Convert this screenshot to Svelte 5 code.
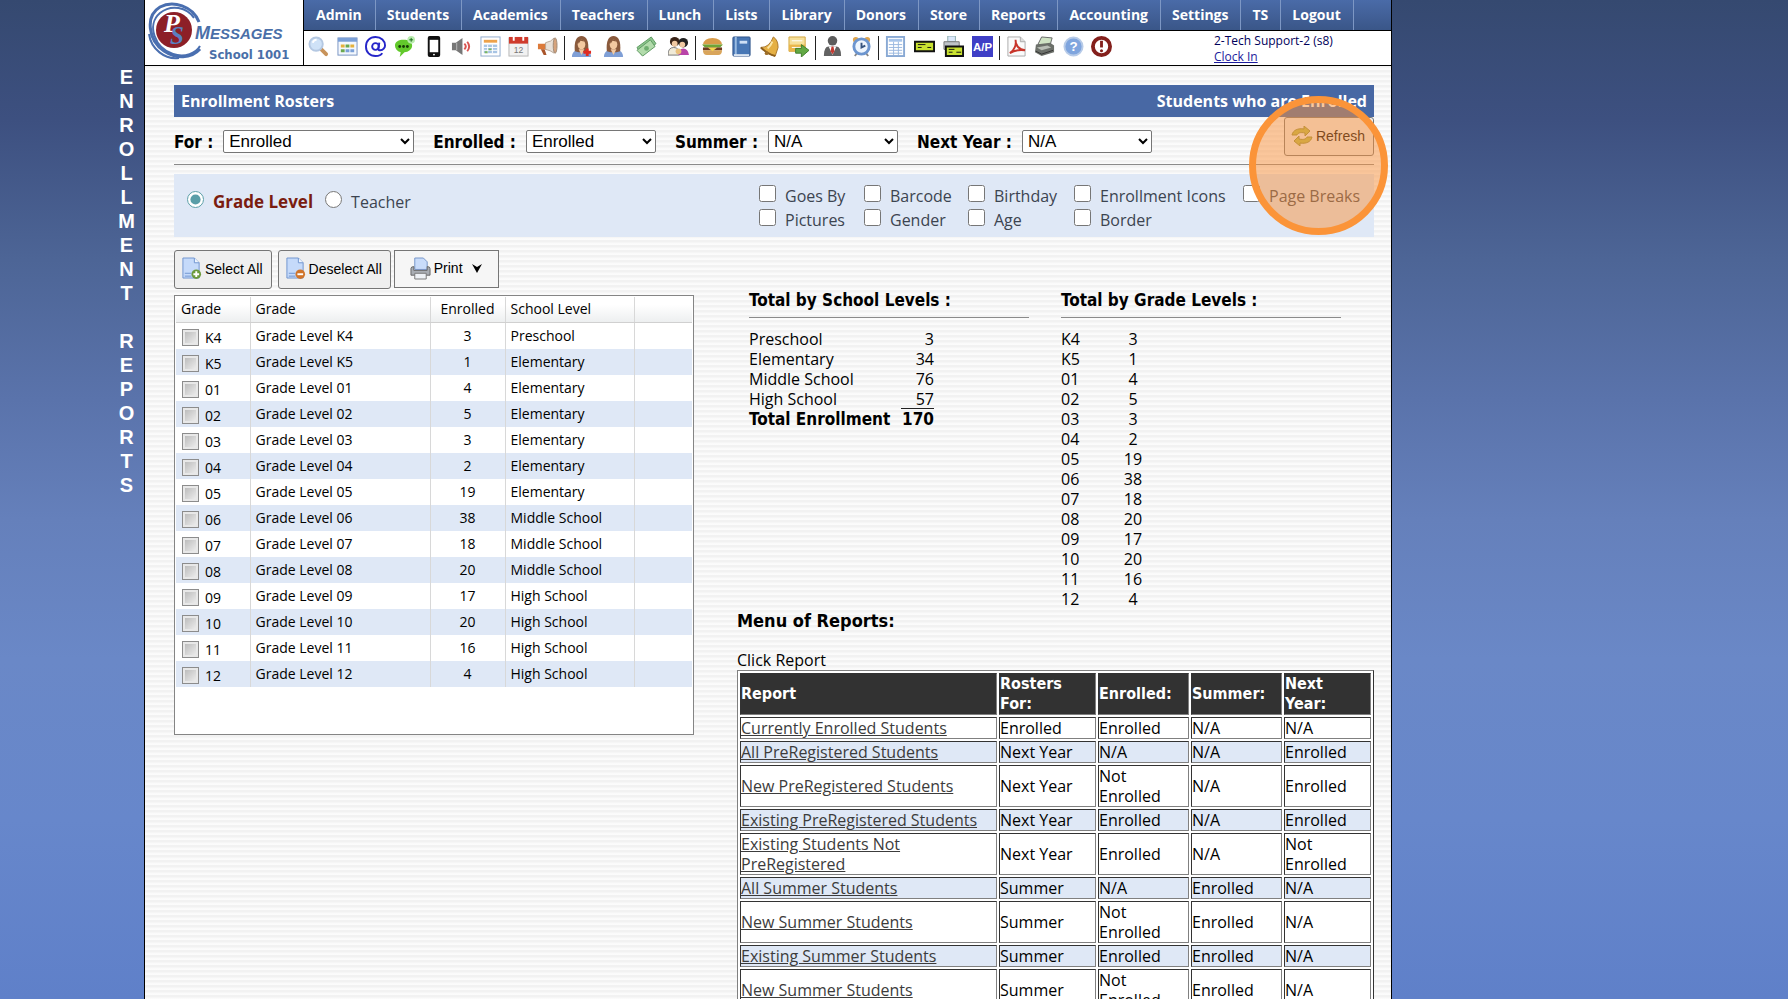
<script lang="ts">
  const navItems = ['Admin', 'Students', 'Academics', 'Teachers', 'Lunch', 'Lists', 'Library', 'Donors', 'Store', 'Reports', 'Accounting', 'Settings', 'TS', 'Logout'];

  const iconGroups = [
    { width: 250, icons: ['search', 'planner', 'email', 'chat', 'phone', 'speaker', 'schedule', 'calendar', 'megaphone'] },
    { width: 118, icons: ['addperson', 'person', 'money', 'family'] },
    { width: 107, icons: ['burger', 'book', 'bell', 'export'] },
    { width: 50, icons: ['staff', 'clock'] },
    { width: 108, icons: ['ledger', 'check', 'printcheck', 'payable'] },
    { width: 106, icons: ['pdf', 'register', 'help', 'alert'] }
  ];

  const woman = '<path d="M1 22c0-5 3-7 7-7h6c4 0 7 2 7 7z" fill="#7f9fd6"/><path d="M4 16C3 5 6 0 11 0s8 5 7 16l-4 1H8z" fill="#8a5a3c"/><ellipse cx="11" cy="9" rx="4" ry="5" fill="#f3c9a0"/><path d="M7 5q4-3 8 1l-5-1-2 3z" fill="#8a5a3c"/><path d="M8 14h6l-3 6z" fill="#f3c9a0"/>';
  const cheque = '<path d="M3 11h18v10H3z" fill="#c9e230" stroke="#111" stroke-width="2"/><path d="M6 14h6M6 17h4M14 17h5" stroke="#111" stroke-width="1"/>';

  const icons: Record<string, string> = {
    search: '<path d="m14 14 5 5" stroke="#c8935a" stroke-width="4" stroke-linecap="round"/><circle cx="8.500" cy="8.500" r="7" fill="#cfe2f7" stroke="#b4c8e2" stroke-width="2"/><path d="M5 7q1-3 4-3" stroke="#fff" stroke-width="2" fill="none"/>',
    planner: '<rect x="1" y="2" width="20" height="18" fill="#f4f8fd" stroke="#7793c2"/><path d="M1 2h20v4H1z" fill="#7ba0d8"/><path d="M4 9h4v3H4zM14 9h4v3h-4z" fill="#e5b13d"/><path d="M9 9h4v3H9zM4 14h4v3H4z" fill="#6aa84f"/><path d="M9 14h4v3H9zM14 14h4v3h-4z" fill="#7ba0d8"/>',
    email: '<g fill="none" stroke="#2525c9" stroke-width="2"><circle cx="11" cy="11" r="3.500"/><path d="m15 7-1 6q0 2 2 2c3 0 5-3 5-5 0-5-4-9-10-9-6 0-10 4-10 10s4 10 10 10c3 0 6-1 7-3"/></g>',
    chat: '<path d="M10 4c5 0 9 2 9 6s-4 7-8 7l-5 5 1-5c-4-1-6-4-6-7 0-4 4-6 9-6z" fill="#62c92b"/><g fill="#163b06"><circle cx="6" cy="11" r="1.500"/><circle cx="10" cy="11" r="1.500"/><circle cx="14" cy="11" r="1.500"/></g><circle cx="18" cy="4" r="4" fill="#b9ecae"/><path d="M18 2v4M16 4h4" stroke="#1b6a1b"/>',
    phone: '<rect x="5" y="0" width="13" height="22" rx="2" fill="#111"/><path d="M7 4h9v13H7z" fill="#fff"/><circle cx="11.500" cy="19.500" r="1" fill="#fff"/>',
    speaker: '<path d="M1 7h4l7-5v18l-7-5H1z" fill="#777"/><path d="M6 7v8" stroke="#bbb"/><path d="M14 8q3 3 0 6M17 6q4 5 0 10" fill="none" stroke="#d9534f" stroke-width="2"/>',
    schedule: '<rect x="1" y="1" width="20" height="20" fill="#fff" stroke="#8fa9cc"/><path d="M4 4h14v3H4z" fill="#eda24b"/><path d="M4 9h14v9H4z" fill="#a7c4e4"/><path d="M4 12h14M4 15h14M8 9v9M13 9v9" stroke="#fff"/><path d="M5 16h3v2H5zM9 13h3v2H9z" fill="#7bb662"/>',
    calendar: '<rect x="1" y="2" width="20" height="19" fill="#f1f1f1" stroke="#b5b5b5"/><path d="M1 1h20v7H1z" fill="#cf3b2c"/><path d="M6 0v5M16 0v5" stroke="#fff" stroke-width="2"/><text x="11" y="18" font-size="9" text-anchor="middle" fill="#777" font-family="Liberation Sans">12</text>',
    megaphone: '<path d="M1 8h7l2-1v8l-2-1H1z" fill="#dc7a3a"/><path d="M9 7q6-1 9-5v16q-4-3-9-4z" fill="#e8e0d8" stroke="#b9a695"/><path d="M4 14h4l2 6H7z" fill="#a9552b"/><ellipse cx="19" cy="10" rx="2" ry="8" fill="#d6a37c" stroke="#a08a78"/>',
    addperson: woman + '<path d="M17 13v8M13 17h8" stroke="#e02b20" stroke-width="3"/>',
    person: woman,
    money: '<path d="M1 12 16 1l5 7L6 20z" fill="#8cc48c" stroke="#5d9a62"/><path d="M1 15 15 4l5 7L7 21z" fill="#b2dbab" stroke="#5d9a62"/><circle cx="11" cy="13" r="2.500" fill="#6fae70"/>',
    family: '<path d="M0 20q0-8 6-8t6 8z" fill="#f0ead8" stroke="#777"/><path d="M11 20q0-7 5-7t6 7z" fill="#b944a8"/><circle cx="7" cy="6" r="5" fill="#3a2418"/><circle cx="7" cy="8" r="3" fill="#f0c9a2"/><circle cx="16" cy="7" r="5" fill="#222"/><circle cx="15" cy="9" r="3" fill="#f0c9a2"/><circle cx="11" cy="16" r="3" fill="#eac07c"/>',
    burger: '<path d="M1 9q1-7 10-7t10 7z" fill="#d89c49"/><path d="M0 9h22l-3 3H3z" fill="#6da436"/><path d="M1 12h20v3H1z" fill="#6e3a1e"/><path d="M1 15h20q0 5-4 5H5q-4 0-4-5z" fill="#d9a55b"/><path d="m6 12 5 4 5-4z" fill="#f4d44c"/>',
    book: '<rect x="2" y="1" width="18" height="20" rx="1" fill="#4877b5" stroke="#2f5489"/><path d="M5 1v20" stroke="#9bbce2" stroke-width="2"/><path d="M9 5h8v3H9z" fill="#cfe0f5"/><path d="M3 20h16" stroke="#dce6f2" stroke-width="2"/>',
    bell: '<path d="M15 1q5 3 5 11l-3 9Q9 20 2 12 11 12 15 1z" fill="#e5b044" stroke="#a8762a"/><path d="M2 12q7 7 15 9" stroke="#8c5f1e" stroke-width="2" fill="none"/><circle cx="8" cy="18" r="2" fill="#9d6e27"/><path d="M14 6q-2 5-5 7" stroke="#fbe6a7" stroke-width="2" fill="none"/>',
    export: '<path d="M1 1h17v15H1z" fill="#f6e09a" stroke="#d3a63f"/><path d="M1 9h17v7H1z" fill="#eab64a"/><path d="M4 12h11M4 5h11" stroke="#fff"/><path d="M8 13h6V9l8 6-8 7v-4H8z" fill="#62a944" stroke="#3f7d2a"/>',
    staff: '<circle cx="11" cy="5" r="5" fill="#5d5d5d"/><path d="M2 21q0-10 5-10h8q5 0 5 10z" fill="#626262"/><path d="m7 11 4 9 4-9z" fill="#fff"/><path d="m10 11-1 5 2 3 2-3-1-5z" fill="#c33a31"/>',
    clock: '<circle cx="5" cy="4" r="3" fill="#e0a54c"/><circle cx="17" cy="4" r="3" fill="#e0a54c"/><path d="m4 21 3-4M18 21l-3-4" stroke="#888" stroke-width="2"/><circle cx="11" cy="11" r="8" fill="#eef5fd" stroke="#6c95cf" stroke-width="3"/><path d="M11 7v5l4-2" fill="none" stroke="#38557f" stroke-width="2"/>',
    ledger: '<rect x="2" y="1" width="18" height="20" fill="#fff" stroke="#89a9d4" stroke-width="2"/><path d="M4 3h14v3H4z" fill="#a8c5ea"/><path d="M4 9h14M4 12h14M4 15h14M4 18h14M9 6v14M14 6v14" stroke="#9ab8df"/>',
    check: '<path d="M1 6h20v10H1z" fill="#c9e230" stroke="#111" stroke-width="2"/><path d="M4 9h8M4 12h4M14 12h4" stroke="#111"/>',
    printcheck: '<path d="M5 0h8v6H5z" fill="#dbe8fb" stroke="#8aa"/><path d="M1 6h16v8H1z" fill="#bfc4c9" stroke="#777"/>' + cheque,
    payable: '<rect width="22" height="22" fill="#3f3fc6"/><text x="11" y="16" font-size="12" font-weight="bold" text-anchor="middle" fill="#fff" font-family="Liberation Sans">A/P</text>',
    pdf: '<path d="M2 1h13l5 5v15H2z" fill="#fafafa" stroke="#aaa"/><path d="M15 1v5h5" fill="#ddd" stroke="#aaa"/><path d="M4 18c5-3 7-9 6-14 0 6 3 10 10 11-6-1-11 0-16 3z" fill="none" stroke="#c8352b" stroke-width="2"/>',
    register: '<path d="m8 1 11 1-2 7H4z" fill="#cfe3c4" stroke="#666"/><path d="M2 9 17 7l4 3v7L8 21l-7-4z" fill="#6c706a"/><path d="m3 12 11-2 4 2-10 3z" fill="#b9beb6"/><path d="m2 16 6 3 12-4" stroke="#333" fill="none"/>',
    help: '<circle cx="11" cy="11" r="9.500" fill="#7fa5de" stroke="#b7cbe8" stroke-width="2"/><text x="11" y="16" font-size="14" font-weight="bold" text-anchor="middle" fill="#fff" font-family="Liberation Sans">?</text>',
    alert: '<circle cx="11" cy="11" r="9" fill="#fff" stroke="#84201c" stroke-width="4"/><path d="M11 5v7" stroke="#84201c" stroke-width="3"/><circle cx="11" cy="15.500" r="1.600" fill="#84201c"/>'
  };

  const sideTitle = 'ENROLLMENT REPORTS'.split('');

  const filters = [
    { id: 'for', label: 'For :', value: 'Enrolled', wide: true },
    { id: 'enrolled', label: 'Enrolled :', value: 'Enrolled' },
    { id: 'summer', label: 'Summer :', value: 'N/A' },
    { id: 'next-year', label: 'Next Year :', value: 'N/A' }
  ];

  const options = ['Goes By', 'Barcode', 'Birthday', 'Enrollment Icons', 'Page Breaks', 'Pictures', 'Gender', 'Age', 'Border'];

  const grades = [
    { grade: 'K4', count: 3, level: 'Preschool' },
    { grade: 'K5', count: 1, level: 'Elementary' },
    { grade: '01', count: 4, level: 'Elementary' },
    { grade: '02', count: 5, level: 'Elementary' },
    { grade: '03', count: 3, level: 'Elementary' },
    { grade: '04', count: 2, level: 'Elementary' },
    { grade: '05', count: 19, level: 'Elementary' },
    { grade: '06', count: 38, level: 'Middle School' },
    { grade: '07', count: 18, level: 'Middle School' },
    { grade: '08', count: 20, level: 'Middle School' },
    { grade: '09', count: 17, level: 'High School' },
    { grade: '10', count: 20, level: 'High School' },
    { grade: '11', count: 16, level: 'High School' },
    { grade: '12', count: 4, level: 'High School' }
  ];

  const schoolLevels = [
    ['Preschool', 3],
    ['Elementary', 34],
    ['Middle School', 76],
    ['High School', 57]
  ];

  const reports = [
    ['Currently Enrolled Students', 'Enrolled', 'Enrolled', 'N/A', 'N/A'],
    ['All PreRegistered Students', 'Next Year', 'N/A', 'N/A', 'Enrolled'],
    ['New PreRegistered Students', 'Next Year', 'Not Enrolled', 'N/A', 'Enrolled'],
    ['Existing PreRegistered Students', 'Next Year', 'Enrolled', 'N/A', 'Enrolled'],
    ['Existing Students Not PreRegistered', 'Next Year', 'Enrolled', 'N/A', 'Not Enrolled'],
    ['All Summer Students', 'Summer', 'N/A', 'Enrolled', 'N/A'],
    ['New Summer Students', 'Summer', 'Not Enrolled', 'Enrolled', 'N/A'],
    ['Existing Summer Students', 'Summer', 'Enrolled', 'Enrolled', 'N/A'],
    ['New Summer Students', 'Summer', 'Not Enrolled', 'Enrolled', 'N/A']
  ];

  let view = $state('grade');
  let checked = $state(grades.map(() => false));

  function setAll(value: boolean) {
    checked = grades.map(() => value);
  }
</script>

{#snippet page(color: string, minus: boolean)}
  <svg class="btn-icon" viewBox="0 0 22 24" aria-hidden="true">
    <path d="M2 1h12l5 5v16H2z" fill="#c5dafa" stroke="#6f94cf" />
    <path d="M14 1v5h5" fill="#eef5ff" stroke="#6f94cf" />
    <path d="M4 17h7M4 20h7" stroke="#6f94cf" />
    <circle cx="16" cy="18" r="5" fill={color} />
    <path d={minus ? 'M13 18h6' : 'M13 18h6M16 15v6'} stroke="#fff" stroke-width="2" />
  </svg>
{/snippet}

<div class="screen">
  <aside class="side-title" aria-label="Enrollment Reports">
    {#each sideTitle as letter}
      <span>{letter}</span>
    {/each}
  </aside>

  <div class="page">
    <header>
      <a class="logo" href="#home" aria-label="Messages, School 1001">
        <svg viewBox="0 0 158 65">
          <g fill="none" stroke="#4a6fb0">
            <path d="M54 22C48 6 28 0 15 7 0 16 3 40 19 51c12 8 27 8 36-2" stroke-width="3" />
            <path d="M49 18C42 7 26 4 15 13 1 25 10 48 28 54c12 4 23-1 27-8" stroke-width="2" />
            <path d="M34 58c-14 2-28-9-30-24" stroke-width="2" />
          </g>
          <circle cx="29" cy="30" r="18" fill="#8d1f27" />
          <text x="19" y="32" class="mono" font-size="26" fill="#fff">P</text>
          <text x="25" y="44" class="mono" font-size="25" fill="#5a80c0">S</text>
          <text x="50" y="39" class="brand" font-size="18">M<tspan font-size="15">ESSAGES</tspan></text>
          <text x="64" y="59" class="school" font-size="13">School 1001</text>
        </svg>
      </a>
      <div class="bars">
        <nav>
          {#each navItems as item}
            <a href="#{item.toLowerCase()}">{item}</a>
          {/each}
        </nav>
        <div class="toolbar">
          <div class="icon-groups">
            {#each iconGroups as group}
              <div class="icon-group">
                <div class="icons" style="width: {group.width}px">
                  {#each group.icons as icon}
                    <a href="#{icon}" aria-label={icon}><svg viewBox="0 0 22 22">{@html icons[icon]}</svg></a>
                  {/each}
                </div>
              </div>
            {/each}
          </div>
          <div class="user">
            <div>2-Tech Support-2 (s8)</div>
            <a href="#clock-in">Clock In</a>
          </div>
        </div>
      </div>
    </header>

    <main>
      <div class="title-bar">
        <span>Enrollment Rosters</span>
        <span>Students who are Enrolled</span>
      </div>

      <div class="filters">
        {#each filters as filter}
          <div class="filter">
            <label for={filter.id}>{filter.label}</label>
            <select id={filter.id} class:wide={filter.wide}>
              <option>{filter.value}</option>
            </select>
          </div>
        {/each}
        <div class="refresh">
          <button type="button">
            <svg viewBox="0 0 22 20" aria-hidden="true">
              <path d="M1 9c1-5 6-7 12-6V0l6 5-5 5V7C9 6 7 7 6 9z" fill="#b9bd4a" stroke="#8f8d38" />
              <path d="M21 11c-1 5-6 7-12 6v3l-6-5 5-5v3c5 1 7 0 8-2z" fill="#b9bd4a" stroke="#8f8d38" />
            </svg>
            Refresh
          </button>
          <span class="highlight"></span>
        </div>
      </div>

      <div class="options">
        <div class="views">
          <label class:active={view === 'grade'}><input type="radio" value="grade" bind:group={view} />Grade Level</label>
          <label class:active={view === 'teacher'}><input type="radio" value="teacher" bind:group={view} />Teacher</label>
        </div>
        <div class="checks">
          {#each options as option}
            <label><input type="checkbox" />{option}</label>
          {/each}
        </div>
      </div>

      <div class="columns">
        <section class="roster">
          <div class="buttons">
            <button type="button" onclick={() => setAll(true)}>{@render page('#6c9a3c', false)}Select All</button>
            <button type="button" onclick={() => setAll(false)}>{@render page('#d0742a', true)}Deselect All</button>
            <button type="button" class="print">
              <svg class="btn-icon" viewBox="0 0 22 24" aria-hidden="true">
                <path d="M5 1h9l4 4v8H5z" fill="#c9dcfa" stroke="#7494c8" />
                <path d="M1 12q0-2 3-2v4h14v-4q3 0 3 2v7H1z" fill="#a9adb3" stroke="#666" />
                <path d="M5 17h12v6H5z" fill="#eef1f5" stroke="#777" />
              </svg>
              Print
              <svg class="caret" viewBox="0 0 10 9" aria-hidden="true"><path d="m0 0 5 3 5-3-5 9z" /></svg>
            </button>
          </div>

          <div class="grid-box">
            <table class="grid">
              <colgroup>
                <col class="c-check" /><col class="c-name" /><col class="c-count" /><col class="c-level" /><col />
              </colgroup>
              <thead>
                <tr><th>Grade</th><th>Grade</th><th class="num">Enrolled</th><th>School Level</th><th></th></tr>
              </thead>
              <tbody>
                {#each grades as row, i}
                  <tr>
                    <td><label class="pick"><input type="checkbox" bind:checked={checked[i]} />{row.grade}</label></td>
                    <td>Grade Level {row.grade}</td>
                    <td class="num">{row.count}</td>
                    <td>{row.level}</td>
                    <td></td>
                  </tr>
                {/each}
              </tbody>
            </table>
          </div>
        </section>

        <section class="summary">
          <div class="totals">
            <div class="total">
              <h3>Total by School Levels :</h3>
              <table>
                <tbody>
                  {#each schoolLevels as [name, count]}
                    <tr><td class="name">{name}</td><td class="sum">{count}</td></tr>
                  {/each}
                  <tr class="grand"><td class="name">Total Enrollment</td><td class="sum">170</td></tr>
                </tbody>
              </table>
            </div>
            <div class="total">
              <h3>Total by Grade Levels :</h3>
              <table>
                <tbody>
                  {#each grades as row}
                    <tr><td class="code">{row.grade}</td><td class="count">{row.count}</td></tr>
                  {/each}
                </tbody>
              </table>
            </div>
          </div>

          <h2>Menu of Reports:</h2>
          <p>Click Report</p>
          <table class="reports">
            <colgroup>
              <col class="r-name" /><col class="r-for" /><col class="r-mid" /><col class="r-mid" /><col />
            </colgroup>
            <thead>
              <tr><th>Report</th><th>Rosters For:</th><th>Enrolled:</th><th>Summer:</th><th>Next<br />Year:</th></tr>
            </thead>
            <tbody>
              {#each reports as [name, ...cells]}
                <tr>
                  <td><a href="#report">{name}</a></td>
                  {#each cells as cell}
                    <td>{cell}</td>
                  {/each}
                </tr>
              {/each}
            </tbody>
          </table>
        </section>
      </div>
    </main>
  </div>
</div>

<style>
  :global(body) {
    background: #5f80c9;
  }

  .screen {
    --bold: 'DejaVu Sans Condensed', 'DejaVu Sans', sans-serif;
    --text: 'Open Sans', 'Noto Sans', sans-serif;
    display: grid;
    grid-template-columns: 144px minmax(0, 1248px) 1fr;
    height: 100vh;
    overflow: hidden;
    background: linear-gradient(#354970, #3d5080 12%, #4d6596 26%, #5a73ab 40%, #6580bb 52%, #6a88c7 66%, #6787cb 82%, #5f80c9);
    font-family: var(--text);
    font-size: 16px;
    line-height: 20px;
    color: #000;
  }

  .side-title {
    display: flex;
    flex-direction: column;
    align-items: center;
    width: 35px;
    margin-left: auto;
    padding-top: 65px;
    font: bold 20px/24px 'Liberation Sans', Arial, sans-serif;
    color: #fff;
  }

  .side-title span {
    height: 24px;
  }

  .page {
    border: solid #000;
    border-width: 0 1px;
    background: repeating-linear-gradient(#f2f2f2 0, #f2f2f2 2px, #fafafa 3px, #fcfcfc 5px);
  }

  header {
    display: flex;
    height: 65px;
    background: #fff;
    border-bottom: 1px solid #000;
  }

  .logo {
    width: 158px;
    border-right: 1px solid #000;
  }

  .logo svg {
    display: block;
    height: 65px;
  }

  .mono {
    font-family: 'Liberation Serif', serif;
    font-weight: bold;
    font-style: italic;
  }

  .brand {
    font-family: 'Liberation Sans', sans-serif;
    font-weight: bold;
    font-style: italic;
    fill: #4a6fa8;
  }

  .school {
    font-family: var(--bold);
    font-weight: bold;
    fill: #4a6fa8;
  }

  .bars {
    flex: 1;
  }

  nav {
    display: flex;
    height: 30px;
    background: linear-gradient(#4a6ba8, #3a5688);
    border-bottom: 1px solid #000;
  }

  nav a {
    padding: 0 12px 0 11px;
    border-right: 1px solid #7d97c4;
    font: bold 14px/30px var(--text);
    color: #fff;
    text-decoration: none;
  }

  nav a:first-child {
    padding: 0 13px 0 12px;
  }

  .toolbar {
    display: flex;
    justify-content: space-between;
    padding: 2px 60px 0 4px;
  }

  .icon-groups {
    display: flex;
    padding-top: 3px;
  }

  .icon-group {
    height: 24px;
    padding: 0 6px;
    border-right: 1px solid #222;
  }

  .icon-group:first-child {
    padding-left: 0;
  }

  .icon-group:last-child {
    border-right: 0;
  }

  .icons {
    display: flex;
    justify-content: space-between;
  }

  .icons svg {
    display: block;
    width: 21px;
    height: 21px;
  }

  .user {
    width: 117px;
    font-size: 12px;
    line-height: 16px;
    white-space: nowrap;
    color: #00005a;
  }

  .user a {
    color: #1a1a9c;
  }

  main {
    padding: 19px 17px 0 29px;
  }

  .title-bar {
    display: flex;
    justify-content: space-between;
    padding: 0 7px;
    background: #4868a4;
    font: bold 16px/32px var(--text);
    color: #fff;
  }

  .filters {
    display: flex;
    gap: 19px;
    height: 47px;
    border-bottom: 1px solid #8a8a8a;
  }

  .filter {
    display: flex;
    align-items: center;
    gap: 10px;
    padding-top: 2px;
    font: bold 17px/20px var(--bold);
  }

  select {
    width: 130px;
    height: 23px;
    padding: 0 1px;
    border: 1px solid #767676;
    border-radius: 2px;
    background: #fff;
    font: 17px 'Liberation Sans', Arial, sans-serif;
  }

  select.wide {
    width: 191px;
  }

  .refresh {
    position: relative;
    margin-left: auto;
  }

  button {
    display: flex;
    align-items: center;
    gap: 3px;
    height: 39px;
    padding: 0 8px 2px 6px;
    border: 1px solid #767676;
    border-radius: 3px;
    background: #efefef;
    font: 14px 'Liberation Sans', Arial, sans-serif;
    color: #000;
  }

  .refresh svg {
    width: 22px;
    height: 20px;
  }

  .highlight {
    position: absolute;
    top: -21px;
    right: -14px;
    z-index: 1;
    box-sizing: border-box;
    width: 139px;
    height: 139px;
    border: 7px solid #fb9439;
    border-radius: 50%;
    background: rgba(250, 146, 60, 0.5);
    pointer-events: none;
  }

  .options {
    display: flex;
    justify-content: space-between;
    height: 63px;
    margin-top: 9px;
    background: #dfe8f6;
    color: #3c4450;
  }

  .options input {
    width: 17px;
    height: 17px;
    margin: 1px 0 0;
  }

  .options label {
    display: flex;
    line-height: 24px;
    white-space: nowrap;
  }

  .views {
    display: flex;
    gap: 12px;
    padding: 16px 0 0 13px;
  }

  .views label {
    gap: 9px;
  }

  .views .active {
    font-weight: bold;
    font-size: 17px;
    color: #7a1c10;
  }

  .views input {
    accent-color: #5a9ea8;
  }

  .checks {
    display: grid;
    grid-template-columns: 105px 104px 106px 169px 131px;
    grid-auto-rows: 24px;
    padding-top: 10px;
  }

  .checks label {
    gap: 9px;
  }

  .columns {
    display: flex;
    gap: 43px;
  }

  .roster {
    width: 520px;
    padding-top: 13px;
  }

  .buttons {
    display: flex;
    gap: 6px;
    margin-bottom: 6px;
  }

  .btn-icon {
    width: 21px;
    height: 23px;
  }

  .buttons .print {
    height: 38px;
    margin-left: -3px;
    padding: 0 16px 2px 15px;
    border-radius: 0;
    background: #f6f6f6;
  }

  .caret {
    width: 10px;
    height: 9px;
    margin-left: 6px;
  }

  .grid-box {
    height: 436px;
    padding: 1px;
    border: 1px solid #858585;
    background: #fff;
  }

  .grid {
    width: 100%;
    table-layout: fixed;
    border-collapse: collapse;
    font-size: 14px;
  }

  .c-check {
    width: 74px;
  }

  .c-name {
    width: 180px;
  }

  .c-count {
    width: 75px;
  }

  .c-level {
    width: 129px;
  }

  .grid th,
  .grid td {
    height: 26px;
    padding: 0 5px;
    border-right: 1px solid #d8d8d8;
    text-align: left;
    font-weight: normal;
    line-height: 26px;
  }

  .grid th:last-child,
  .grid td:last-child {
    border-right: 0;
  }

  .grid thead {
    background: linear-gradient(#fff 30%, #eceeef);
  }

  .grid th {
    height: 24px;
    padding-bottom: 1px;
    border-bottom: 1px solid #d0d0d0;
    line-height: 24px;
  }

  .grid tbody tr:nth-child(even) {
    background: #dfe8f6;
  }

  .grid .num {
    text-align: center;
  }

  .pick {
    display: flex;
    align-items: center;
    gap: 6px;
    height: 26px;
    padding: 3px 0 0 1px;
    box-sizing: border-box;
  }

  .pick input {
    appearance: none;
    box-sizing: border-box;
    width: 17px;
    height: 17px;
    margin: 0;
    border: 1px solid #8c8c8c;
    background: linear-gradient(135deg, #b4b4b4, #f4f4f4);
    box-shadow: inset 0 0 0 2px #e8e8e8;
  }

  .pick input:checked {
    background: #4868a4;
  }

  .summary {
    flex: 1;
    min-width: 0;
    padding-top: 53px;
  }

  .totals {
    display: grid;
    grid-template-columns: 280px 280px;
    gap: 32px;
    margin-left: 12px;
  }

  h3 {
    margin: 0 0 11px;
    padding-bottom: 7px;
    border-bottom: 1px solid #8a8a8a;
    font: bold 17px/20px var(--bold);
  }

  .total table {
    border-collapse: collapse;
  }

  .total td {
    height: 20px;
    padding: 0;
    line-height: 20px;
  }

  .total .name {
    width: 152px;
    white-space: nowrap;
  }

  .total .sum {
    width: 33px;
    text-align: right;
  }

  .total .code {
    width: 54px;
  }

  .total .count {
    width: 36px;
    text-align: center;
  }

  .grand td {
    font-family: var(--bold);
    font-size: 17px;
    font-weight: bold;
  }

  .grand .sum {
    box-shadow: 0 -1px #222;
  }

  h2 {
    margin: 0 0 18px;
    padding-top: 1px;
    font: bold 18px/22px var(--bold);
  }

  p {
    margin: 0;
  }

  .reports {
    width: 100%;
    table-layout: fixed;
    border: 1px solid #808080;
    border-right-color: #333;
    border-spacing: 2px;
    background: #fff;
  }

  .r-name {
    width: 257px;
  }

  .r-for {
    width: 97px;
  }

  .r-mid {
    width: 91px;
  }

  .reports th,
  .reports td {
    padding: 0;
    border: 1px solid;
    border-color: #333 #808080 #808080 #333;
    text-align: left;
  }

  .reports th {
    background: #323232;
    font: bold 16px/20px var(--bold);
    color: #fff;
  }

  .reports tbody tr:nth-child(even) {
    background: #dfe8f6;
  }

  .reports a {
    color: #3c3c3c;
  }
</style>
